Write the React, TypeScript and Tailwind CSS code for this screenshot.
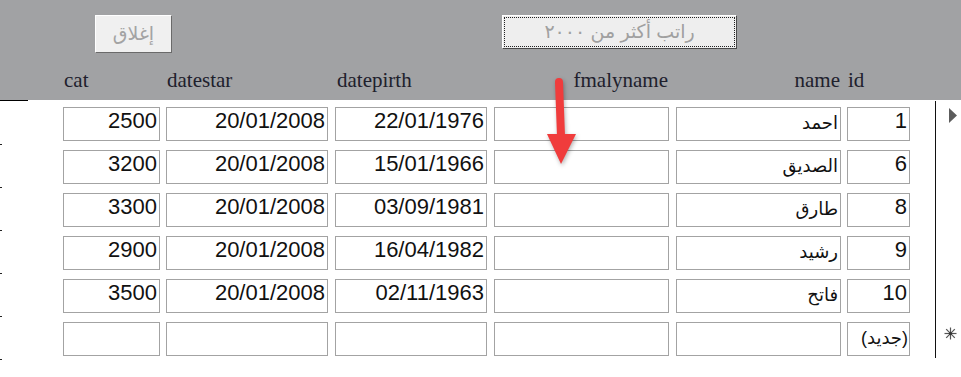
import React from "react";

const colCls = [
  "w-[97px]",
  "ml-[6px] w-[162px]",
  "ml-[7px] w-[152px]",
  "ml-[7px] w-[175px]",
  "ml-[7px] w-[165px]",
  "ml-[6px] w-[63px]",
];

const rows = [
  ["2500", "20/01/2008", "22/01/1976", "", "احمد", "1"],
  ["3200", "20/01/2008", "15/01/1966", "", "الصديق", "6"],
  ["3300", "20/01/2008", "03/09/1981", "", "طارق", "8"],
  ["2900", "20/01/2008", "16/04/1982", "", "رشيد", "9"],
  ["3500", "20/01/2008", "02/11/1963", "", "فاتح", "10"],
  ["", "", "", "", "", "(جديد)"],
];

const sans = { fontFamily: '"Liberation Sans", "DejaVu Sans", sans-serif' };
const serif = { fontFamily: '"Liberation Serif", "DejaVu Sans", serif' };

function Cell({ cls, text, kind }: { cls: string; text: string; kind: "num" | "ar" | "new" }) {
  const k =
    kind === "ar"
      ? "pr-[2px] pt-[3px] text-[18px] leading-[24px]"
      : kind === "new"
      ? "pr-[1px] pt-[3px] text-[18px] leading-[24px]"
      : "pr-[2px] pt-[1px] text-[22px] leading-[24px]";
  return (
    <div
      className={`${cls} h-[34px] border border-[#a3a3a3] bg-white text-right text-[#111] overflow-hidden whitespace-nowrap ${k}`}
      style={sans}
    >
      {text}
    </div>
  );
}

export default function App() {
  return (
    <div className="relative w-[961px] h-[377px] bg-white overflow-hidden">
      {/* header band */}
      <div className="h-[100px] bg-[#a1a2a4] flex flex-col">
        <div className="flex items-start pt-[15px] pl-[95px]">
          <button
            className="w-[77px] h-[38px] bg-[#f0f0f0] border border-t-white border-l-white border-r-[#6a6a6a] border-b-[#6a6a6a] text-[#a3a3a3] text-[19px] flex items-center justify-center"
            style={sans}
          >
            إغلاق
          </button>
          <button
            className="ml-[330px] w-[235px] h-[34px] bg-[#eeeeee] border border-t-white border-l-white border-r-[#4a4a4a] border-b-[#4a4a4a] p-[1px]"
            style={sans}
          >
            <div
              dir="rtl"
              className="w-full h-full border border-dotted border-[#222] flex items-center justify-center text-[#a0a0a0] text-[19px]"
            >
              راتب أكثر من ٢٠٠٠
            </div>
          </button>
        </div>
        <div className="flex mt-[15px] text-[21px] leading-[24px] text-[#20202c]" style={serif}>
          <div className="w-[63px]" />
          <div className={`${colCls[0]} pl-[1px]`}>cat</div>
          <div className={`${colCls[1]} pl-[1px]`}>datestar</div>
          <div className={`${colCls[2]} pl-[2px]`}>datepirth</div>
          <div className={`${colCls[3]} text-right pr-[1px]`}>fmalyname</div>
          <div className={`${colCls[4]} text-right pr-[1px]`}>name</div>
          <div className={`${colCls[5]} pl-[1px]`}>id</div>
        </div>
      </div>

      {/* body */}
      <div className="flex h-[277px]">
        <div className="w-[935px] flex flex-col">
          <div className="h-px w-[28px] bg-black" />
          <div className="pt-[6px] flex flex-col">
            {rows.map((r, i) => (
              <div key={i} className="h-[43px] flex items-start">
                <div className="w-[63px] h-full flex flex-col justify-end pb-[5px]">
                  <div className="w-[2px] h-px bg-[#222]" />
                </div>
                {r.map((t, j) => (
                  <Cell
                    key={j}
                    cls={colCls[j]}
                    text={t}
                    kind={j === 4 ? "ar" : j === 5 && i === 5 ? "new" : "num"}
                  />
                ))}
              </div>
            ))}
          </div>
        </div>
        <div className="w-px h-[257px] mt-[1px] bg-[#111]" />
        <div className="w-[25px] flex flex-col pt-[7px]">
          <div className="h-[43px] pl-[13px] pt-[1px]">
            <svg width="8" height="15" viewBox="0 0 8 15">
              <polygon points="0,0 8,7.5 0,15" fill="#5c5c5c" />
            </svg>
          </div>
          <div className="h-[43px]" />
          <div className="h-[43px]" />
          <div className="h-[43px]" />
          <div className="h-[43px]" />
          <div className="h-[43px] pl-[8px] pt-[5px]">
            <svg width="13" height="13" viewBox="0 0 13 13">
              <g stroke="#555" strokeWidth="1.2">
                <line x1="6.5" y1="0.5" x2="6.5" y2="12.5" />
                <line x1="0.5" y1="6.5" x2="12.5" y2="6.5" />
                <line x1="2.2" y1="2.2" x2="10.8" y2="10.8" />
                <line x1="10.8" y1="2.2" x2="2.2" y2="10.8" />
              </g>
              <circle cx="6.5" cy="6.5" r="1.6" fill="#333" />
            </svg>
          </div>
        </div>
      </div>

      {/* red arrow annotation */}
      <svg
        className="absolute left-[540px] top-[70px] drop-shadow-[1px_2px_2px_rgba(0,0,0,0.3)]"
        width="45"
        height="100"
        viewBox="0 0 45 100"
      >
        <line x1="19" y1="12" x2="21" y2="66" stroke="#f03c3c" strokeWidth="8" strokeLinecap="round" />
        <polygon points="7,64 36,64 21,94" fill="#f03c3c" />
      </svg>
    </div>
  );
}
